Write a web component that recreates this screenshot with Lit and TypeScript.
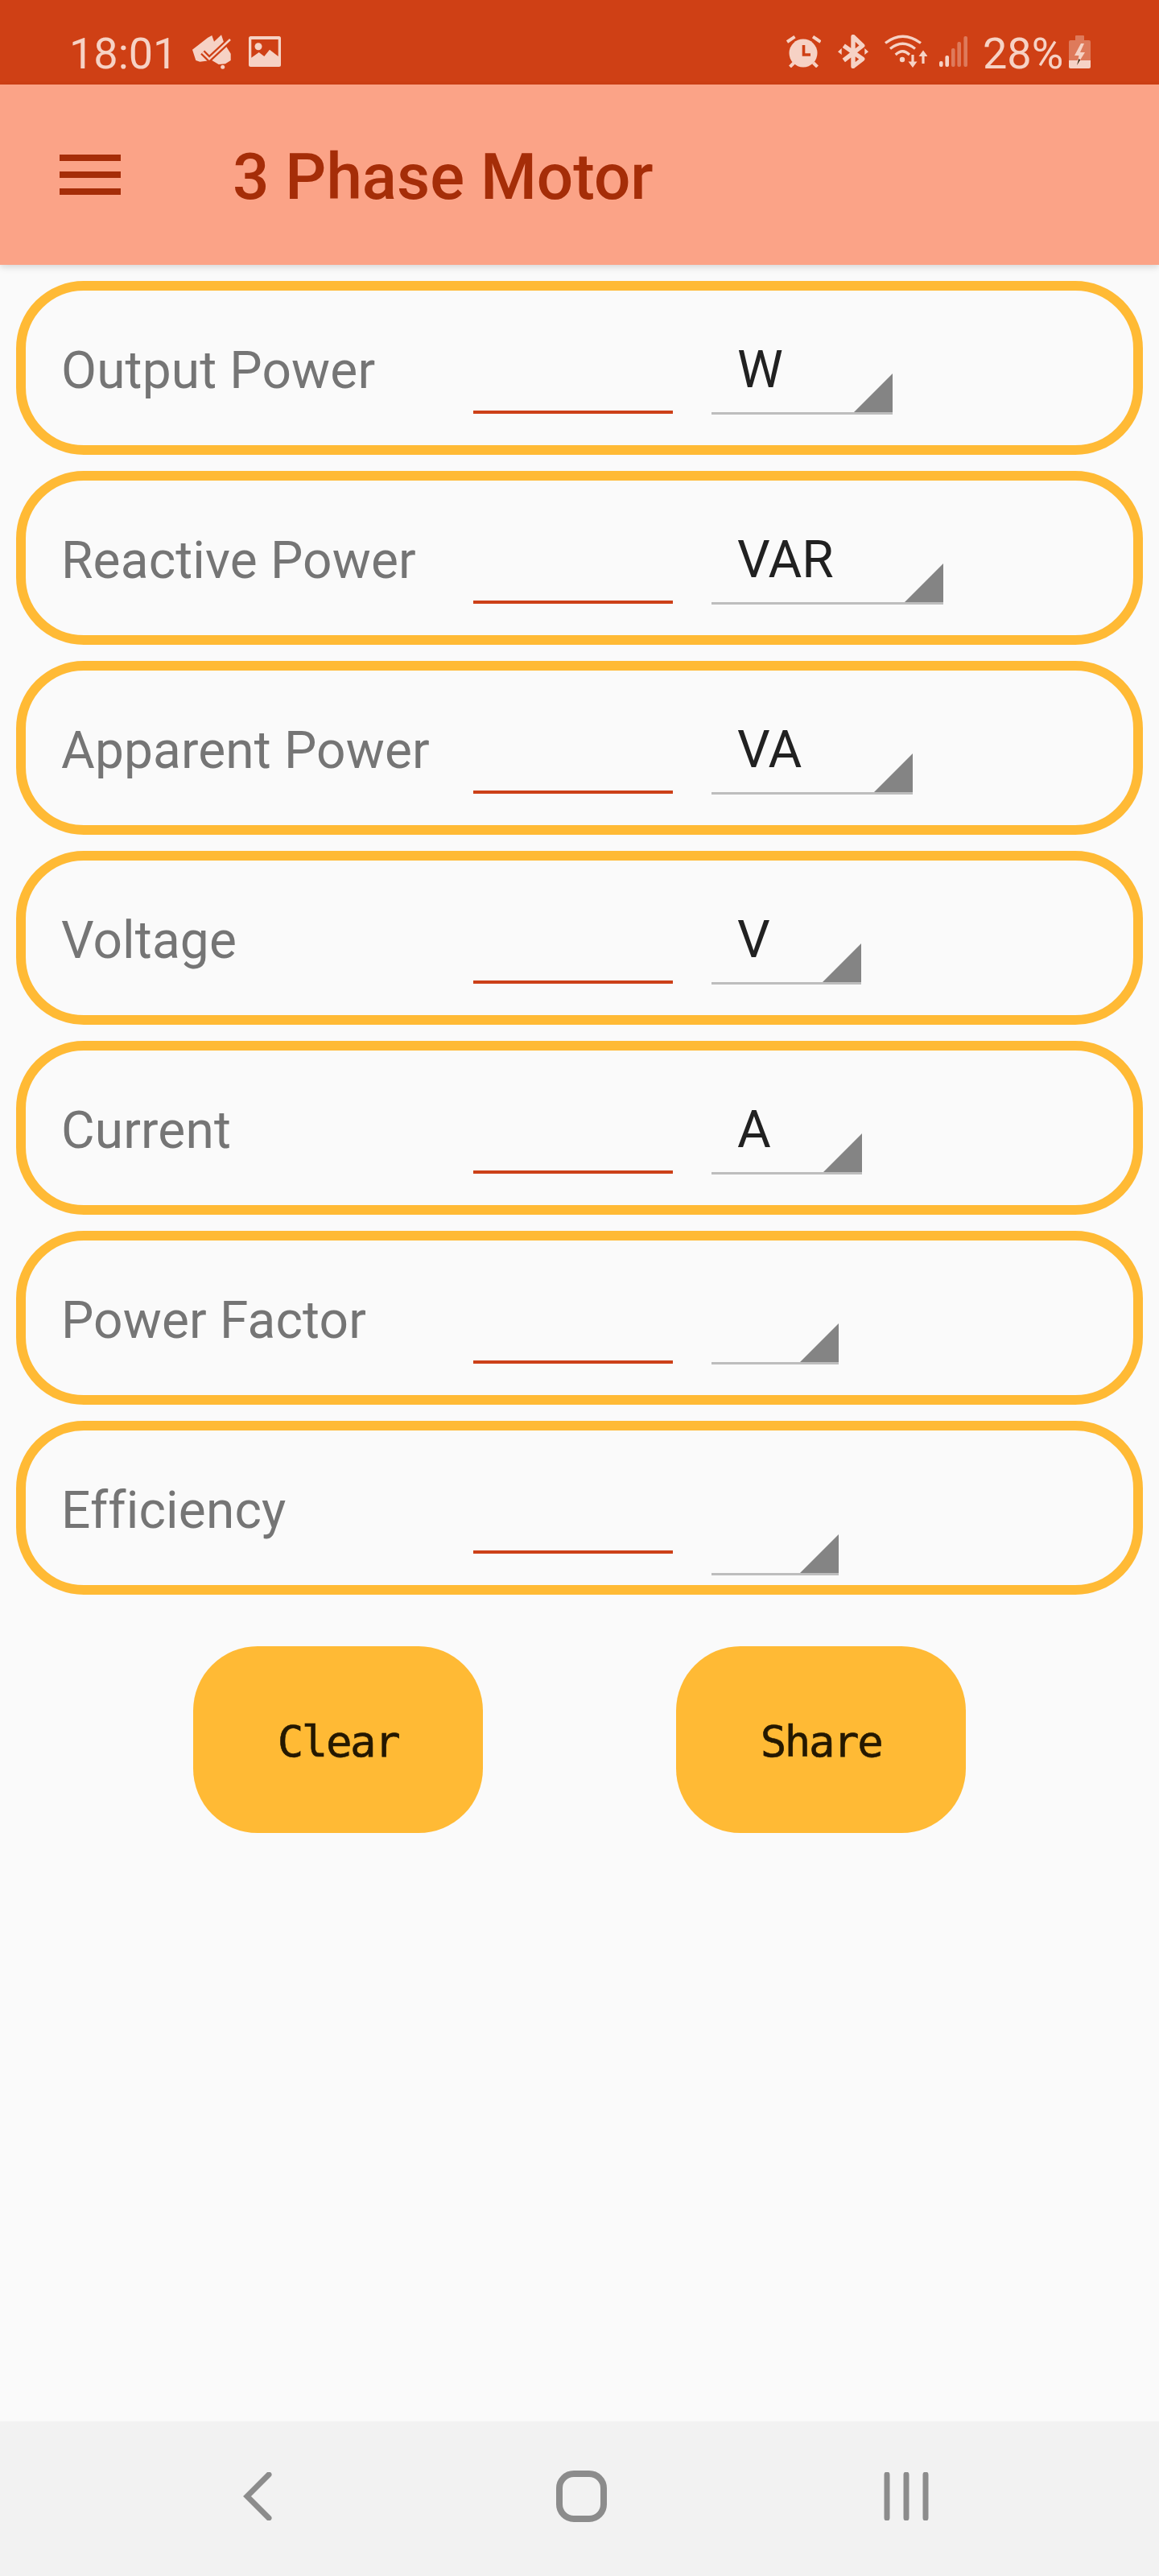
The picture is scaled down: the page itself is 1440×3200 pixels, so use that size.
import { LitElement, html, css } from "lit";
import { customElement } from "lit/decorators.js";

interface Row { label: string; unit: string; width: number; low?: boolean }

const ROWS: Row[] = [
  { label: "Output Power", unit: "W", width: 225 },
  { label: "Reactive Power", unit: "VAR", width: 288 },
  { label: "Apparent Power", unit: "VA", width: 250 },
  { label: "Voltage", unit: "V", width: 186 },
  { label: "Current", unit: "A", width: 187 },
  { label: "Power Factor", unit: "", width: 158 },
  { label: "Efficiency", unit: "", width: 158, low: true },
];

@customElement("app-root")
export class AppRoot extends LitElement {
  static styles = css`
    :host { display: block; font-family: Roboto, "Liberation Sans", sans-serif; }
    .page { display: flex; flex-direction: column; min-height: 3200px; background: #fafafa; }

    .status { height: 105px; box-sizing: border-box; padding: 23px 85px 0 86px; display: flex; align-items: center; background: #cf4015; color: #f6d2c5; font-size: 54px; line-height: 60px; }
    .status svg { display: block; flex: none; fill: currentColor; }
    .time { width: 153px; position: relative; top: 3px; }
    .map { margin-right: 22px; }
    .right { margin-left: auto; display: flex; align-items: center; }
    .bt { margin-left: 21px; }
    .wifi { margin-left: 20px; }
    .signal { margin-left: 15px; }
    .pct { margin-left: 18px; width: 107px; position: relative; top: 3px; }

    .bar { height: 224px; flex: none; box-sizing: border-box; padding-left: 74px; display: flex; align-items: center; background: #fba387; color: #a52d08; box-shadow: 0 3px 8px rgba(0, 0, 0, 0.14); position: relative; }
    .menu { width: 76px; height: 50px; flex: none; display: flex; flex-direction: column; justify-content: space-between; }
    .menu i { display: block; height: 8px; background: currentColor; }
    .title { margin: 5px 0 0 139px; font-size: 80px; font-weight: 500; line-height: 94px; }

    .rows { display: flex; flex-direction: column; gap: 20px; padding: 20px 20px 0; }
    .card { height: 216px; box-sizing: border-box; border: 12px solid #ffba35; border-radius: 84px; padding-left: 44px; display: flex; align-items: flex-start; }
    .label { width: 512px; flex: none; margin-top: 62px; font-size: 64px; line-height: 76px; letter-spacing: 0.15px; color: #757575; }
    .input { width: 248px; height: 53px; flex: none; margin-top: 100px; box-sizing: border-box; padding: 0; border: 0; border-bottom: 4px solid #cc4018; outline: 0; background: transparent; border-radius: 0; }
    .spinner { height: 95px; flex: none; margin: 59px 0 0 48px; box-sizing: border-box; padding: 2px 0 0 32px; border-bottom: 3px solid #bdbdbd; position: relative; font-size: 64px; line-height: 76px; color: #212121; }
    .spinner::after { content: ""; position: absolute; right: 0; bottom: 0; width: 48px; height: 48px; background: #848484; clip-path: polygon(100% 0, 100% 100%, 0 100%); }
    .spinner.low { margin-top: 85px; }

    .actions { display: flex; gap: 240px; justify-content: center; margin-top: 64px; }
    .btn { width: 360px; height: 232px; border: 0; padding: 4px 0 0; border-radius: 80px; background: #ffba35; color: #241800; font-family: "DejaVu Sans Mono", "Liberation Mono", monospace; font-size: 54px; letter-spacing: -2.4px; -webkit-text-stroke: 0.6px #241800; }

    .nav { margin-top: auto; height: 192px; box-sizing: border-box; padding: 0 0 6px 302px; display: flex; align-items: center; background: #f2f2f2; color: #8c8c8c; }
    .nav svg { display: block; flex: none; fill: none; stroke: currentColor; }
    .home { margin-left: 353px; }
    .recent { margin-left: 344px; }
  `;

  private leftIcons() {
    return html`
      <svg class="map" width="48" height="43" viewBox="0 0 48 43">
        <path d="M0 18.7 19.3 3.7 24.3 1 27 8.7 36 .3 39.3 10.3 47.7 23.7 47.7 32 41 36.3 32.7 37 24.3 32 9.3 33.7 4.3 32Z" />
        <circle cx="37.7" cy="40.3" r="2.5" />
        <path d="M12.7 22 21 30.3 46 7" fill="none" stroke="#cf4015" stroke-width="7" />
        <path d="M12.7 22 21 30.3 47 6" fill="none" stroke="#f6d2c5" stroke-width="2.5" />
      </svg>
      <svg width="40" height="38" viewBox="0 0 40 38">
        <rect width="40" height="38" rx="2.5" />
        <path d="M3.3 4H36.7V25L26 16.7 19.3 25 12.7 20 3.3 26.7Z" fill="#cf4015" />
        <circle cx="12" cy="12.7" r="4.5" />
      </svg>
    `;
  }

  private rightIcons() {
    return html`
      <svg width="43" height="40" viewBox="0 0 43 40">
        <circle cx="21" cy="22" r="17.5" />
        <path d="M21.5 12V24H30" fill="none" stroke="#cf4015" stroke-width="3.6" />
        <path d="M1 8 10.5 1.7M42.5 8 33 1.7M4.5 39 9.5 34M38.5 39 33.5 34" fill="none" stroke="currentColor" stroke-width="4" />
      </svg>
      <svg class="bt" width="38" height="42" viewBox="0 0 38 42">
        <path d="M7.3 13.7 30.7 30.3 19 39.5V2.5L30.7 13.7 7.3 32" fill="none" stroke="currentColor" stroke-width="5.4" stroke-linejoin="round" />
        <path d="M0 21.3 4.7 17V25ZM38 21.3 33.3 17V25Z" />
      </svg>
      <svg class="wifi" width="53" height="42" viewBox="0 0 53 42">
        <g fill="none" stroke="currentColor" stroke-width="3.2">
          <path d="M1 10.5Q22.5-6 45 10.5" />
          <path d="M7 17.5Q22.5 5 38 17.5" />
          <path d="M13.7 25Q22.5 16.5 31 25" />
          <path d="M35 25V38M48 36V24" />
        </g>
        <circle cx="22" cy="31" r="3.2" />
        <path d="M29.5 33.5H40.5L35 41ZM42.5 27H53.5L48 19.5Z" />
      </svg>
      <svg class="signal" width="36" height="38" viewBox="0 0 36 38">
        <rect x="0" y="31" width="4.6" height="7" rx="2" />
        <rect x="7.4" y="24" width="4.6" height="14" rx="2" />
        <g opacity="0.4">
          <rect x="15" y="15" width="4.6" height="23" rx="2" />
          <rect x="22.4" y="7" width="4.6" height="31" rx="2" />
          <rect x="30.4" y="0" width="4.6" height="38" rx="2" />
        </g>
      </svg>
      <span class="pct">28%</span>
      <svg width="27" height="41" viewBox="0 0 27 41">
        <path opacity="0.4" d="M9 0H18Q19 0 19 1V6H25Q27 6 27 8V31H0V8Q0 6 2 6H8V1Q8 0 9 0Z" />
        <path d="M0 31H27V39Q27 41 25 41H2Q0 41 0 39Z" />
        <path d="M15 10 7 25H12.5L10 37 20 21H14L19 10Z" fill="#f6d2c5" />
        <path d="M12.5 29 10 37 14 30.5Z" fill="#241800" />
      </svg>
    `;
  }

  render() {
    return html`
      <div class="page">
        <div class="status">
          <span class="time">18:01</span>
          ${this.leftIcons()}
          <div class="right">${this.rightIcons()}</div>
        </div>
        <header class="bar">
          <div class="menu"><i></i><i></i><i></i></div>
          <h1 class="title">3 Phase Motor</h1>
        </header>
        <main class="rows">
          ${ROWS.map(
            (r) => html`
              <div class="card">
                <span class="label">${r.label}</span>
                <input class="input" type="text" aria-label=${r.label} />
                <div class="spinner ${r.low ? "low" : ""}" style="width:${r.width}px">${r.unit}</div>
              </div>
            `
          )}
        </main>
        <div class="actions">
          <button class="btn">Clear</button>
          <button class="btn">Share</button>
        </div>
        <nav class="nav">
          <svg width="36" height="60" viewBox="0 0 36 60">
            <path d="M32 3 5 30 32 57" stroke-width="7" stroke-linecap="round" />
          </svg>
          <svg class="home" width="63" height="64" viewBox="0 0 63 64">
            <rect x="4" y="4" width="55" height="56" rx="18" stroke-width="8" />
          </svg>
          <svg class="recent" width="60" height="60" viewBox="0 0 60 60">
            <path d="M4 3V57M28 3V57M52 3V57" stroke-width="7" stroke-linecap="round" />
          </svg>
        </nav>
      </div>
    `;
  }
}
